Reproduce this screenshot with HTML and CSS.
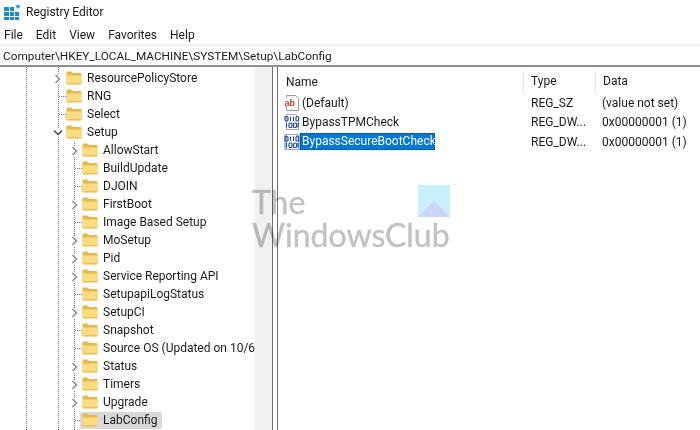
FILE: index.html
```html
<!DOCTYPE html>
<html lang="en">
<head>
<meta charset="utf-8">
<title>Registry Editor</title>
<link rel="stylesheet" href="styles.css">
</head>
<body>
<svg class="defs" width="0" height="0" aria-hidden="true">
  <defs>
    <symbol id="folder" viewBox="0 0 16 14">
      <path d="M.5 1.5Q.5.5 1.5.5h4l1.5 1.5h7.5q1 0 1 1v9q0 1-1 1h-13q-1 0-1-1z" fill="#e9b84c"/>
      <path d="M.5 4.5h15v7.8q0 1-1 1h-13q-1 0-1-1z" fill="#fbdc82"/>
      <path d="M.5 12h15v.5q0 1-1 1h-13q-1 0-1-1z" fill="#eebf58"/>
    </symbol>
    <symbol id="chev-r" viewBox="0 0 8 10">
      <path d="M1.5 1l4 4-4 4" fill="none" stroke="#8a8a8a" stroke-width="1.5"/>
    </symbol>
    <symbol id="chev-d" viewBox="0 0 10 8">
      <path d="M1 1.5l4 4 4-4" fill="none" stroke="#444" stroke-width="1.5"/>
    </symbol>
    <symbol id="bin" viewBox="0 0 16 16">
      <path d="M2.5.5h9l3 3v12h-12z" fill="#fff" stroke="#9aa7c0"/>
      <g fill="none" stroke="#2d4f96" stroke-width="1.2">
        <rect x="1" y="2.5" width="3" height="4.5" rx="1"/><path d="M6.5 2.5v4.5"/><path d="M9.5 2.5v4.5"/><rect x="12" y="2.5" width="2.6" height="4.5" rx="1"/>
        <path d="M2.5 9v4.5"/><rect x="5" y="9" width="3" height="4.5" rx="1"/><rect x="9.5" y="9" width="3" height="4.5" rx="1"/><path d="M14 9v4.5"/>
      </g>
    </symbol>
  </defs>
</svg>
<div class="window">
  <header class="titlebar">
    <svg class="app-icon" width="18" height="18" viewBox="0 0 18 18" aria-hidden="true">
      <path d="M1 4h5v4H1zM1 9h5v4H1zM1 14h5v3H1zM7 4h4v4H7zM7 9h4v4H7zM7 14h4v3H7zM12 9h4v4h-4zM12 14h4v3h-4z" fill="#1b8ac9"/>
      <path d="M15 1l2.5 2.5L15 6l-2.5-2.5z" fill="#2ca0d8"/>
    </svg>
    <span>Registry Editor</span>
  </header>
  <nav class="menubar">
    <span>File</span><span>Edit</span><span>View</span><span>Favorites</span><span>Help</span>
  </nav>
  <div class="address">Computer\HKEY_LOCAL_MACHINE\SYSTEM\Setup\LabConfig</div>
  <main class="panes">
    <section class="tree">
      <i class="guide guide-a"></i><i class="guide guide-b"></i><i class="guide guide-c"></i>
      <div class="row l1"><svg class="chev"><use href="#chev-r"/></svg><svg class="folder"><use href="#folder"/></svg><span class="label">ResourcePolicyStore</span></div>
      <div class="row l1 leaf"><svg class="folder"><use href="#folder"/></svg><span class="label">RNG</span></div>
      <div class="row l1 leaf"><svg class="folder"><use href="#folder"/></svg><span class="label">Select</span></div>
      <div class="row l1"><svg class="chev down"><use href="#chev-d"/></svg><svg class="folder"><use href="#folder"/></svg><span class="label">Setup</span></div>
      <div class="row l2"><svg class="chev"><use href="#chev-r"/></svg><svg class="folder"><use href="#folder"/></svg><span class="label">AllowStart</span></div>
      <div class="row l2 leaf"><svg class="folder"><use href="#folder"/></svg><span class="label">BuildUpdate</span></div>
      <div class="row l2 leaf"><svg class="folder"><use href="#folder"/></svg><span class="label">DJOIN</span></div>
      <div class="row l2"><svg class="chev"><use href="#chev-r"/></svg><svg class="folder"><use href="#folder"/></svg><span class="label">FirstBoot</span></div>
      <div class="row l2 leaf"><svg class="folder"><use href="#folder"/></svg><span class="label">Image Based Setup</span></div>
      <div class="row l2"><svg class="chev"><use href="#chev-r"/></svg><svg class="folder"><use href="#folder"/></svg><span class="label">MoSetup</span></div>
      <div class="row l2"><svg class="chev"><use href="#chev-r"/></svg><svg class="folder"><use href="#folder"/></svg><span class="label">Pid</span></div>
      <div class="row l2"><svg class="chev"><use href="#chev-r"/></svg><svg class="folder"><use href="#folder"/></svg><span class="label">Service Reporting API</span></div>
      <div class="row l2 leaf"><svg class="folder"><use href="#folder"/></svg><span class="label">SetupapiLogStatus</span></div>
      <div class="row l2"><svg class="chev"><use href="#chev-r"/></svg><svg class="folder"><use href="#folder"/></svg><span class="label">SetupCI</span></div>
      <div class="row l2 leaf"><svg class="folder"><use href="#folder"/></svg><span class="label">Snapshot</span></div>
      <div class="row l2 leaf"><svg class="folder"><use href="#folder"/></svg><span class="label">Source OS (Updated on 10/6/</span></div>
      <div class="row l2"><svg class="chev"><use href="#chev-r"/></svg><svg class="folder"><use href="#folder"/></svg><span class="label">Status</span></div>
      <div class="row l2"><svg class="chev"><use href="#chev-r"/></svg><svg class="folder"><use href="#folder"/></svg><span class="label">Timers</span></div>
      <div class="row l2"><svg class="chev"><use href="#chev-r"/></svg><svg class="folder"><use href="#folder"/></svg><span class="label">Upgrade</span></div>
      <div class="row l2 leaf current"><svg class="folder"><use href="#folder"/></svg><span class="label">LabConfig</span></div>
    </section>
    <div class="scrollbar"></div>
    <div class="splitter"></div>
    <section class="list">
      <div class="list-row list-head">
        <span class="col-name head-name">Name</span><span class="col-type">Type</span><span class="col-data">Data</span>
      </div>
      <div class="list-row">
        <span class="col-name">
          <svg class="val-icon" viewBox="0 0 16 16" aria-hidden="true"><path d="M2.5.5h9l3 3v12h-12z" fill="#fff" stroke="#9a9a9a"/><rect x="0" y="3" width="12.5" height="8" fill="#fff"/><text class="ab" x="0.5" y="10.5">ab</text></svg>
          <span class="val-name">(Default)</span>
        </span>
        <span class="col-type">REG_SZ</span><span class="col-data">(value not set)</span>
      </div>
      <div class="list-row">
        <span class="col-name"><svg class="val-icon"><use href="#bin"/></svg><span class="val-name">BypassTPMCheck</span></span>
        <span class="col-type">REG_DW...</span><span class="col-data">0x00000001 (1)</span>
      </div>
      <div class="list-row">
        <span class="col-name"><svg class="val-icon selected-icon"><use href="#bin"/></svg><span class="val-name selected">BypassSecureBootCheck</span></span>
        <span class="col-type">REG_DW...</span><span class="col-data">0x00000001 (1)</span>
      </div>
    </section>
  </main>
  <div class="watermark">
    <div class="wm-text">The<br>WindowsClub</div>
    <svg class="wm-logo" width="32" height="32" viewBox="0 0 32 32" aria-hidden="true">
      <rect width="32" height="32" fill="#c8effc"/>
      <path d="M0 32L16 16l16 16z" fill="#c9d6f7"/>
    </svg>
  </div>
</div>
</body>
</html>
```
FILE: styles.css
```css
* { box-sizing: border-box; }
html, body { margin: 0; padding: 0; background: #fff; }
body { font-family: "Roboto", "Open Sans", sans-serif; font-size: 12px; color: #1a1a1a; }
.defs { position: absolute; }
.window { position: relative; width: 700px; height: 430px; overflow: hidden; display: flex; flex-direction: column; }
.titlebar { height: 23px; display: flex; align-items: center; gap: 5px; padding-left: 3px; font-size: 12px; }
.app-icon { flex: none; margin-top: 1px; }
.menubar { height: 23px; display: flex; align-items: center; gap: 13px; padding: 3px 0 0 4px; font-size: 12px; border-bottom: 2px solid #f0f0f0; }
.address { height: 21px; line-height: 21px; padding-left: 3px; font-size: 11.8px; border-bottom: 2px solid #8e8e8e; white-space: nowrap; }
.panes { flex: 1; min-height: 0; display: flex; }
.tree { position: relative; width: 255px; flex: none; overflow: hidden; padding-top: 2px; }
.guide { position: absolute; top: 0; bottom: 0; border-left: 1px dotted #777; }
.guide-a { left: 26px; }
.guide-b { left: 58px; }
.guide-c { left: 74px; top: 76px; }
.row { position: relative; height: 18px; display: flex; align-items: center; white-space: nowrap; background: transparent; }
.l1 { padding-left: 66px; }
.l2 { padding-left: 82px; }
.folder { width: 16px; height: 14px; flex: none; position: relative; }
.label { margin-left: 5px; position: relative; }
.chev { position: absolute; width: 8px; height: 10px; top: 5px; background: #fff; }
.chev.down { width: 10px; height: 8px; top: 6px; }
.l1 .chev { left: 54px; }
.l1 .chev.down { left: 53px; }
.l2 .chev { left: 71px; }
.leaf::before { content: ""; position: absolute; top: 9px; width: 7px; border-top: 1px dotted #777; }
.l1.leaf::before { left: 59px; }
.l2.leaf::before { left: 75px; }
.current::after { content: ""; position: absolute; left: 80px; top: 1px; width: 82px; height: 17px; background: #d9d9d9; border-radius: 2px; }
.current .folder, .current .label { z-index: 1; }
.scrollbar { width: 17px; flex: none; background: #f0f0f0; }
.splitter { width: 6px; flex: none; background: #fff; border-left: 1px solid #6e6e6e; border-right: 1px solid #6e6e6e; }
.list { flex: 1; min-width: 0; padding: 4px 0 0 7px; }
.list-row { display: flex; height: 19.5px; align-items: center; white-space: nowrap; }
.list-head { height: 22px; }
.list-head span { height: 22px; line-height: 20px; }
.col-name { width: 238px; flex: none; display: flex; align-items: center; }
.head-name { padding-left: 1px; }
.col-type { width: 72px; flex: none; padding-left: 7px; border-left: 1px solid transparent; }
.col-data { flex: 1; padding-left: 7px; }
.list-head .col-type, .list-head .col-data { border-left: 1px solid #e5e5e5; }
.val-icon { width: 16px; height: 16px; flex: none; margin-left: -1px; }
.ab { font-family: "Liberation Sans", sans-serif; font-size: 9px; font-weight: 700; fill: #c4431f; }
.val-name { margin-left: 0; padding: 0 2px; }
.selected { background: #0078d7; color: #fff; width: 135px; height: 17px; line-height: 17px; outline: 1px dotted #0a3f70; outline-offset: -1px; }
.selected-icon { background: #9cc7ee; }
.watermark { position: absolute; left: 252px; top: 185px; width: 198px; height: 64px; pointer-events: none; }
.wm-text { font-family: "Lato", sans-serif; font-size: 32px; line-height: 33px; color: #c2c2c2; mix-blend-mode: multiply; -webkit-text-stroke: 0.4px #c2c2c2; }
.wm-logo { position: absolute; right: 0; top: 0; }
```
